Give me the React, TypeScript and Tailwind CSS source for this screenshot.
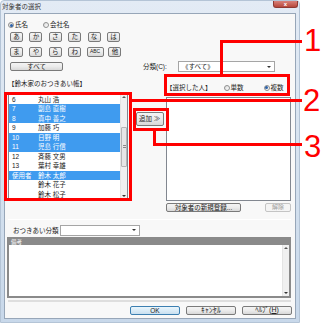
import React from "react";

const kanaRow1 = ["あ", "か", "さ", "た", "な", "は"];
const kanaRow2 = ["ま", "や", "ら", "わ"];

const people = [
  { no: "6", name: "丸山 浩", sel: false },
  { no: "7", name: "副島 直樹", sel: true },
  { no: "8", name: "真中 善之", sel: true },
  { no: "9", name: "加藤 巧", sel: false },
  { no: "10", name: "日野 明", sel: true },
  { no: "11", name: "児島 行信", sel: true },
  { no: "12", name: "斉藤 文男", sel: false },
  { no: "13", name: "葉村 幸雄", sel: false },
  { no: "使用者", name: "鈴木 太郎", sel: true },
  { no: "", name: "鈴木 花子", sel: false },
  { no: "", name: "鈴木 松子", sel: false },
];

const btn =
  "border border-[#7a7a7a] rounded-[2px] bg-gradient-to-b from-[#f4f4f4] via-[#ebebeb] to-[#d8d8d8] flex items-center justify-center text-[#222]";

const Radio = ({ on }: { on?: boolean }) => (
  <span className="w-[6px] h-[6px] rounded-full border border-[#8e8f8f] bg-gradient-to-br from-[#dcdcdc] to-white flex items-center justify-center shrink-0">
    {on && <span className="w-[3px] h-[3px] rounded-full bg-[#2d62a8]" />}
  </span>
);

const Arrow = ({ up }: { up?: boolean }) => (
  <span
    className={
      up
        ? "w-0 h-0 border-l-[2px] border-r-[2px] border-b-[2px] border-transparent border-b-[#555]"
        : "w-0 h-0 border-l-[2px] border-r-[2px] border-t-[2px] border-transparent border-t-[#333]"
    }
  />
);

const Combo = ({ text, w }: { text: string; w: string }) => (
  <div className={`${w} h-[11px] border border-[#a5a5a5] bg-white flex items-center justify-between pl-[3px] pr-[3px]`}>
    <span className="text-[6.5px] leading-[9px]">{text}</span>
    <Arrow />
  </div>
);

const ScrollBar = ({ thumb }: { thumb?: boolean }) => (
  <div className="w-[7px] h-full bg-[#f0f0f0] border-l border-[#e4e4e4] flex flex-col items-center justify-between py-[2px]">
    <Arrow up />
    {thumb && (
      <div className="w-[6px] h-[40px] border border-[#b5b5b5] rounded-[1px] bg-[#e6e6e6] flex items-center justify-center">
        <span className="w-[3px] h-[3px] border-t border-b border-[#888]" />
      </div>
    )}
    <Arrow />
  </div>
);

const App = () => {
  return (
    <div className="relative w-[324px] h-[324px] bg-white overflow-hidden font-['Liberation_Sans','Noto_Sans_CJK_JP',sans-serif] text-[#222]">
      {/* window */}
      <div className="w-[300px] h-[323px] flex flex-col rounded-t-[4px] bg-gradient-to-b from-[#e3ebf5] via-[#d6e2ef] to-[#c8d8ea] border border-[#b4c4d6]">
        <div className="h-[12px] flex items-start justify-between pl-[1px] pr-[1px]">
          <span className="text-[6.5px] leading-[11px] text-[#333]">対象者の選択</span>
          <div className="w-[25px] h-[7px] rounded-b-[3px] bg-gradient-to-b from-[#d9827a] to-[#b7473b] border border-[#8e3a33] border-t-0 flex items-center justify-center text-white text-[6px] leading-[6px] font-bold">
            x
          </div>
        </div>

        {/* content */}
        <div className="mx-[3px] mb-[3px] flex-1 bg-[#f8f8f8] border border-[#97a6b8] flex flex-col">
          {/* name / company radios */}
          <div className="mt-[7px] ml-[3px] h-[8px] flex items-center text-[6.5px] leading-[8px]">
            <Radio on />
            <span className="ml-[1px]">氏名</span>
            <span className="ml-[15px]"><Radio /></span>
            <span className="ml-[1px]">会社名</span>
          </div>

          {/* kana buttons */}
          <div className="mt-[3px] ml-[5px] flex gap-[6.4px]">
            {kanaRow1.map((k) => (
              <div key={k} className={`${btn} w-[13px] h-[10px] text-[6.5px]`}>{k}</div>
            ))}
          </div>
          <div className="mt-[5px] ml-[5px] flex gap-[6.4px]">
            {kanaRow2.map((k) => (
              <div key={k} className={`${btn} w-[13px] h-[10px] text-[6.5px]`}>{k}</div>
            ))}
            <div className={`${btn} w-[17px] h-[10px] text-[5px] -ml-[1px]`}>ABC</div>
            <div className={`${btn} w-[13px] h-[10px] text-[6.5px] -ml-[1.5px]`}>他</div>
          </div>

          {/* all + category */}
          <div className="mt-[4px] ml-[5px] h-[11px] flex items-center">
            <div className={`${btn} w-[53px] h-[9px] text-[6.5px]`}>すべて</div>
            <span className="ml-[80px] w-[35px] text-[6.5px] leading-[9px]">分類(C):</span>
            <Combo text="《すべて》" w="w-[97px]" />
          </div>

          {/* lists */}
          <div className="mt-[5px] flex">
            <div className="ml-[3px] w-[120px] flex flex-col">
              <div className="h-[16px] pt-[2px] text-[6.5px] leading-[9px]">【鈴木家のおつきあい帳】</div>
              <div className="h-[107px] border border-[#828790] bg-white flex">
                <div className="flex-1 flex flex-col pt-[0.5px]">
                  {people.map((p, i) => (
                    <div
                      key={i}
                      className={`h-[9.5px] flex items-center text-[6.5px] leading-[9px] ${p.sel ? "bg-[#3f9bef] text-white" : ""}`}
                    >
                      <span className="w-[29px] pl-[3px]">{p.no}</span>
                      <span>{p.name}</span>
                    </div>
                  ))}
                </div>
                <ScrollBar thumb />
              </div>
            </div>

            <div className="w-[38px] pt-[35px] pl-[8px]">
              <div className={`${btn} w-[28px] h-[14px] text-[6.5px] justify-start pl-[2px]`}>追加 ≫</div>
            </div>

            <div className="w-[125px] flex flex-col">
              <div className="h-[20px] flex items-center text-[6.5px] leading-[9px] pt-[1px]">
                <span>【選択した人】</span>
                <span className="ml-[12px]"><Radio /></span>
                <span className="ml-[1px]">単数</span>
                <span className="ml-[20px]"><Radio on /></span>
                <span className="ml-[1px]">複数</span>
              </div>
              <div className="h-[104px] border border-[#828790] bg-white" />
              <div className="mt-[2px] h-[9px] flex justify-between">
                <div className={`${btn} w-[75px] h-[9px] text-[6.5px]`}>対象者の新規登録...</div>
                <div className="w-[26px] h-[9px] border border-[#c4c4c4] rounded-[2px] bg-[#f4f4f4] text-[#a0a0a0] text-[6px] flex items-center justify-center">解除</div>
              </div>
            </div>
          </div>

          <div className="mt-[7px] ml-[3px] w-[283px] h-[1px] bg-[#d5d5d5] border-b border-white" />

          {/* category */}
          <div className="mt-[5px] ml-[8px] h-[10px] flex items-center">
            <span className="w-[47px] text-[6.5px] leading-[9px]">おつきあい分類</span>
            <Combo text="" w="w-[80px]" />
          </div>

          {/* memo */}
          <div className="mt-[2px] ml-[2px] w-[284px] h-[61px] border-[2px] border-[#8a8a8a] bg-white flex flex-col">
            <div className="h-[6px] bg-[#8a8a8a] text-white text-[5.5px] leading-[6px] pl-[2px]">備考</div>
            <div className="flex-1 flex justify-end">
              <ScrollBar />
            </div>
          </div>
          <div className="mt-[2px] ml-[3px] w-[283px] h-[2px] bg-[#dedede]" />

          {/* dialog buttons */}
          <div className="mt-[4px] ml-[125px] flex gap-[6px]">
            <div className="w-[50px] h-[9px] border border-[#3c7fb1] rounded-[2px] bg-gradient-to-b from-[#eaf6fd] to-[#c9e0f0] flex items-center justify-center text-[6.5px]">OK</div>
            <div className={`${btn} w-[50px] h-[9px] text-[7.5px] tracking-[0.3px]`}>ｷｬﾝｾﾙ</div>
            <div className={`${btn} w-[50px] h-[9px] text-[7px]`}>ﾍﾙﾌﾟ(<span className="underline">H</span>)</div>
          </div>
        </div>
      </div>

      {/* annotations */}
      <div className="absolute left-[164px] top-[74px] w-[126px] h-[22px] border-[3px] border-[#ff0000]" />
      <div className="absolute left-[220px] top-[40px] w-[3px] h-[35px] bg-[#ff0000]" />
      <div className="absolute left-[220px] top-[40px] w-[82px] h-[3px] bg-[#ff0000]" />
      <div className="absolute left-[304px] top-[23px] text-[31px] leading-[36px] text-[#ff0000]">1</div>

      <div className="absolute left-[4px] top-[92px] w-[128px] h-[109px] border-[3px] border-[#ff0000]" />
      <div className="absolute left-[131px] top-[99px] w-[171px] h-[3px] bg-[#ff0000]" />
      <div className="absolute left-[303px] top-[83px] text-[31px] leading-[36px] text-[#ff0000]">2</div>

      <div className="absolute left-[133px] top-[108px] w-[36px] h-[23px] border-[3px] border-[#ff0000]" />
      <div className="absolute left-[153px] top-[130px] w-[3px] h-[16px] bg-[#ff0000]" />
      <div className="absolute left-[153px] top-[143px] w-[149px] h-[3px] bg-[#ff0000]" />
      <div className="absolute left-[304px] top-[129px] text-[31px] leading-[36px] text-[#ff0000]">3</div>
    </div>
  );
};

export default App;
